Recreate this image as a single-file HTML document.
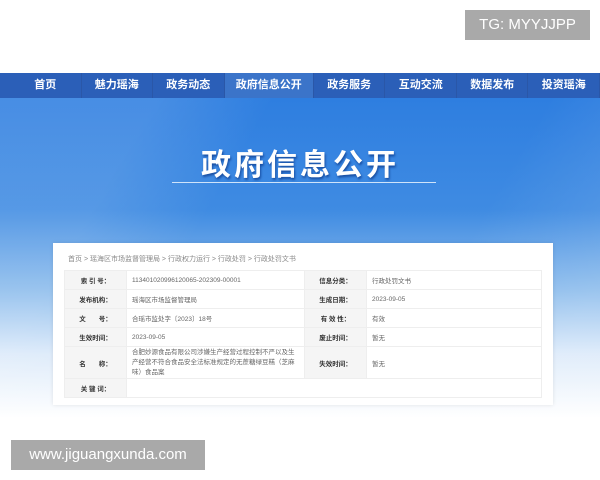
<!DOCTYPE html>
<html><head><meta charset="utf-8"><style>
*{margin:0;padding:0;box-sizing:border-box}
body{width:600px;height:480px;overflow:hidden;background:#fff;font-family:"Liberation Sans","Noto Sans CJK SC",sans-serif;position:relative}
.nav{position:absolute;top:73px;left:0;width:600px;height:25px;background:#2b5fb8;display:flex;padding-left:10px}
.nav div{width:72px;text-align:center;color:#fff;font-size:11px;font-weight:bold;line-height:25px;border-right:1px solid #2a57a8}
.nav div.a{background:#3b74c9;width:90px}
.banner{position:absolute;top:98px;left:0;width:600px;height:320px;background:linear-gradient(180deg,#2e7ee0 0%,#3f8be2 35%,#8cbcec 60%,#dceafa 80%,#fff 100%)}
.banner:before{content:"";position:absolute;inset:0;background:linear-gradient(120deg,rgba(255,255,255,0.12) 0 20%,transparent 35%,transparent 70%,rgba(255,255,255,0.12) 90%)}
.title{position:absolute;top:140px;left:0;width:600px;text-align:center;color:#fff;font-size:30px;font-weight:bold;letter-spacing:3px;text-shadow:1px 2px 2px rgba(0,40,120,.6);font-family:"Noto Sans CJK SC",sans-serif}
.line{position:absolute;top:182px;left:172px;width:264px;height:1px;background:#cfe3fa}
.card{position:absolute;top:243px;left:53px;width:500px;height:162px;background:#fff;box-shadow:0 0 4px rgba(0,0,0,.1)}
.bc{position:absolute;top:11px;left:15px;font-size:7px;color:#888}
table{position:absolute;top:27px;left:11px;width:478px;border-collapse:collapse;font-size:6.5px;color:#666}
td{border:1px solid #eee;padding:0 5px;height:19px}
td.l{background:#f5f5f5;color:#333;font-weight:bold;text-align:center;width:62px}
.wm{position:absolute;background:#a9a9a9;color:#fff;font-size:15px;line-height:30px;text-align:center}
</style></head><body>
<div class="nav"><div>首页</div><div>魅力瑶海</div><div>政务动态</div><div class="a">政府信息公开</div><div>政务服务</div><div>互动交流</div><div>数据发布</div><div>投资瑶海</div></div>
<div class="banner"></div>
<div class="title">政府信息公开</div>
<div class="line"></div>
<div class="card">
<div class="bc">首页 &gt; 瑶海区市场监督管理局 &gt; 行政权力运行 &gt; 行政处罚 &gt; 行政处罚文书</div>
<table>
<tr><td class="l">索 引 号：</td><td style="width:178px">113401020996120065-202309-00001</td><td class="l">信息分类：</td><td>行政处罚文书</td></tr>
<tr><td class="l">发布机构：</td><td>瑶海区市场监督管理局</td><td class="l">生成日期：</td><td>2023-09-05</td></tr>
<tr><td class="l">文　　号：</td><td>合瑶市监处字〔2023〕18号</td><td class="l">有 效 性：</td><td>有效</td></tr>
<tr><td class="l">生效时间：</td><td>2023-09-05</td><td class="l">废止时间：</td><td>暂无</td></tr>
<tr><td class="l" style="height:32px">名　　称：</td><td style="line-height:10px">合肥妙源食品有限公司涉嫌生产经营过程控制不严以及生产经营不符合食品安全法标准规定的无蔗糖绿豆糕（芝麻味）食品案</td><td class="l">失效时间：</td><td>暂无</td></tr>
<tr><td class="l" style="height:18px">关 键 词：</td><td colspan="3"></td></tr>
</table>
</div>
<div class="wm" style="left:465px;top:10px;width:125px">TG: MYYJJPP</div>
<div class="wm" style="left:11px;top:440px;width:194px">www.jiguangxunda.com</div>
</body></html>
